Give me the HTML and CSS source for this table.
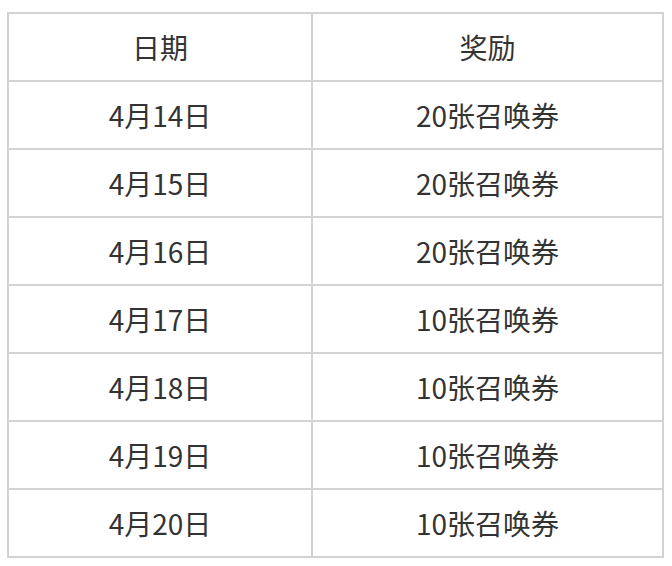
FILE: index.html
```html
<!DOCTYPE html>
<html lang="zh">
<head>
<meta charset="utf-8">
<link rel="stylesheet" href="styles.css">
</head>
<body>
<table class="reward-table">
  <colgroup><col class="col-date"><col class="col-reward"></colgroup>
  <thead>
    <tr><th>日期</th><th>奖励</th></tr>
  </thead>
  <tbody>
    <tr><td>4月14日</td><td>20张召唤券</td></tr>
    <tr><td>4月15日</td><td>20张召唤券</td></tr>
    <tr><td>4月16日</td><td>20张召唤券</td></tr>
    <tr><td>4月17日</td><td>10张召唤券</td></tr>
    <tr><td>4月18日</td><td>10张召唤券</td></tr>
    <tr><td>4月19日</td><td>10张召唤券</td></tr>
    <tr><td>4月20日</td><td>10张召唤券</td></tr>
  </tbody>
</table>
</body>
</html>
```
FILE: styles.css
```css
html, body {
  background: #ffffff;
}
body {
  margin: 0;
  padding: 12px 0 0 7px;
  font-family: "Noto Sans CJK SC", "Noto Sans", sans-serif;
  color: #333333;
}
.reward-table {
  border-collapse: collapse;
  table-layout: fixed;
  width: 655px;
}
.col-date { width: 304px; }
.col-reward { width: 351px; }
.reward-table th,
.reward-table td {
  border: 2px solid #d2d2d2;
  height: 66px;
  padding: 0;
  text-align: center;
  vertical-align: middle;
  font-size: 28px;
  font-weight: 400;
  line-height: 1;
}
```
